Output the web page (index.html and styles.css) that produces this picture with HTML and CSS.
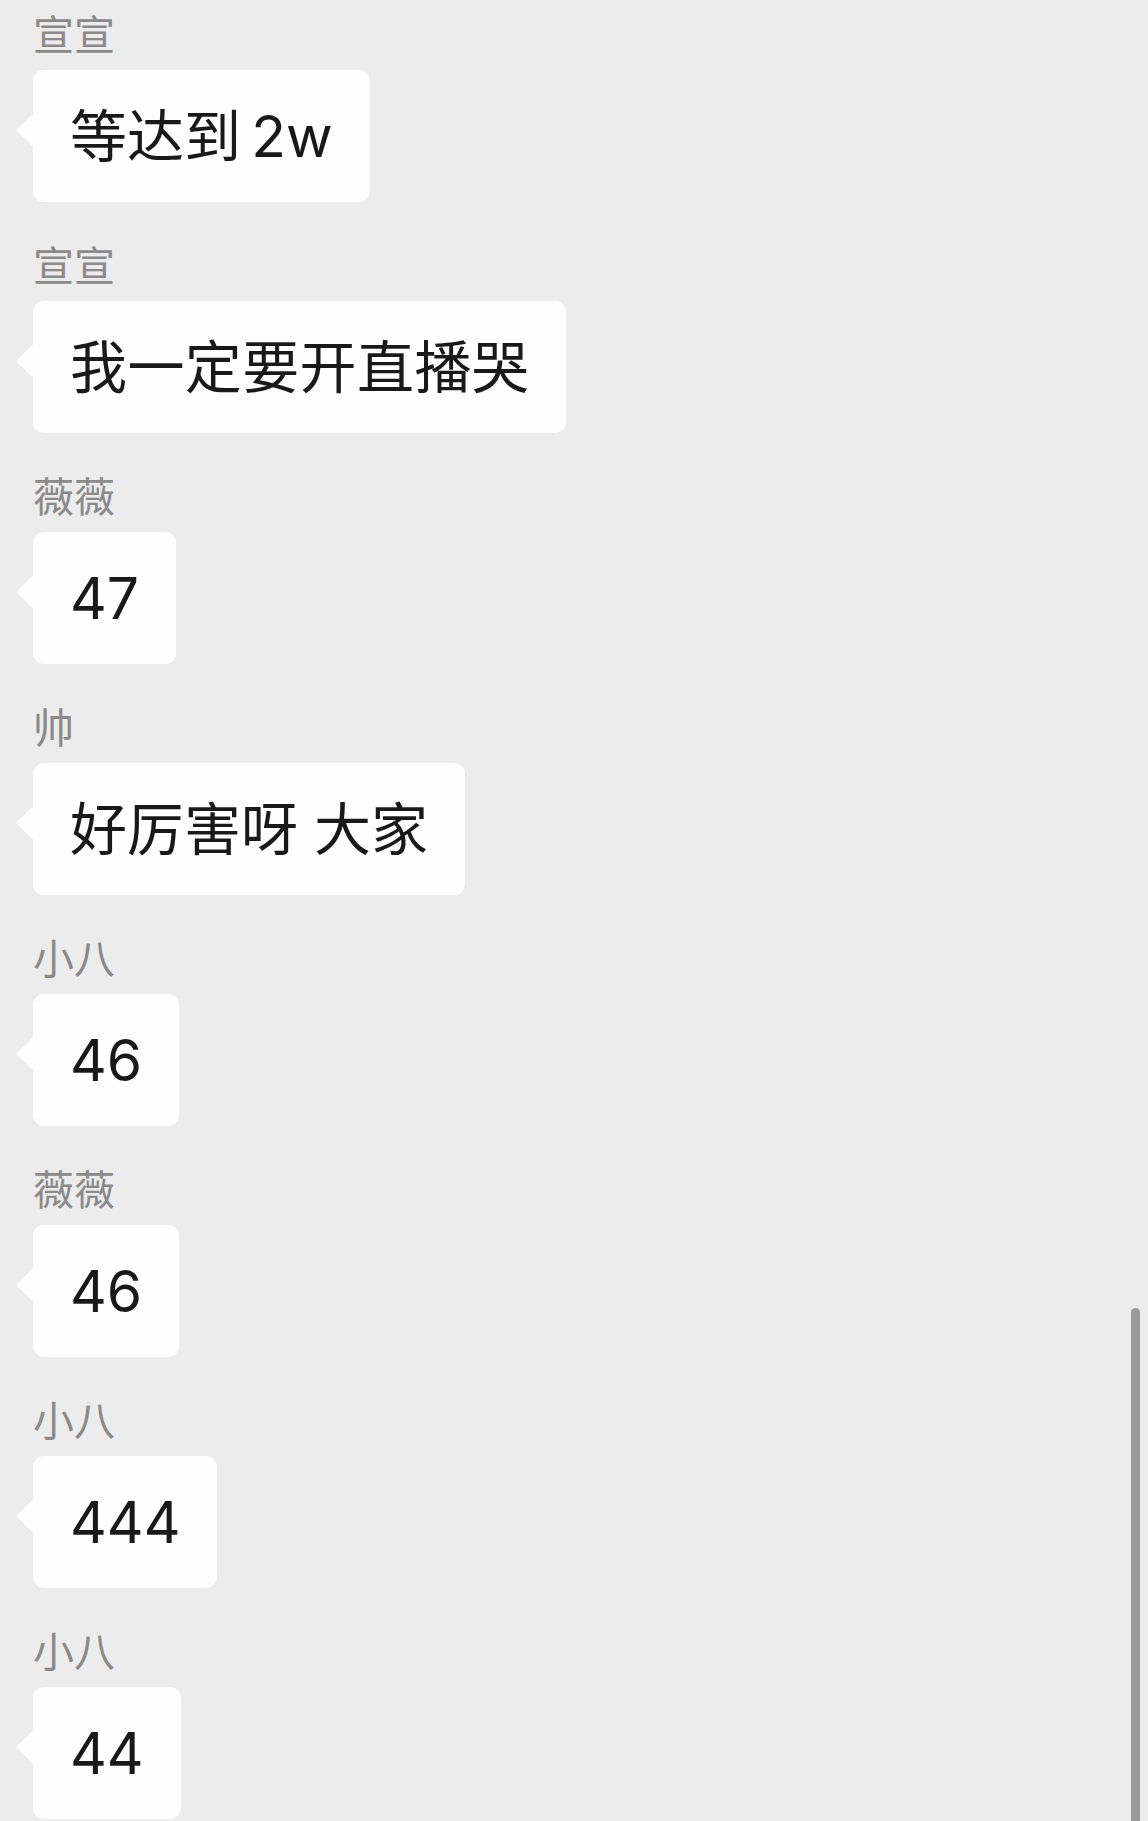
FILE: index.html
```html
<!DOCTYPE html>
<html lang="zh-CN">
<head>
    <meta charset="UTF-8">
    <meta name="viewport" content="width=device-width, initial-scale=1.0">
    <title>群聊</title>
    <link rel="stylesheet" href="styles.css">
</head>
<body>
    <div class="chat">
        <div class="msg">
            <div class="name">宣宣</div>
            <div class="bubble">等达到&thinsp;2w</div>
        </div>
        <div class="msg">
            <div class="name">宣宣</div>
            <div class="bubble wide">我一定要开直播哭</div>
        </div>
        <div class="msg">
            <div class="name">薇薇</div>
            <div class="bubble">47</div>
        </div>
        <div class="msg">
            <div class="name">帅</div>
            <div class="bubble">好厉害呀 大家</div>
        </div>
        <div class="msg">
            <div class="name">小八</div>
            <div class="bubble">46</div>
        </div>
        <div class="msg">
            <div class="name">薇薇</div>
            <div class="bubble">46</div>
        </div>
        <div class="msg">
            <div class="name">小八</div>
            <div class="bubble">444</div>
        </div>
        <div class="msg">
            <div class="name">小八</div>
            <div class="bubble">44</div>
        </div>
    </div>
    <!-- scroll thumb at the right edge -->
    <div class="scroll-thumb"></div>
</body>
</html>
```

FILE: styles.css
```css
html, body {
    margin: 0;
    height: 100%;
    overflow: hidden;
}

body {
    font-family: Inter, "Noto Sans CJK SC", sans-serif;
    background-color: #ececec;
}

.chat {
    display: flex;
    flex-direction: column;
    align-items: flex-start;
    padding: 11px 0 0 33px;
}

.msg {
    display: flex;
    flex-direction: column;
    align-items: flex-start;
    margin-bottom: 40px;
}

.name {
    font-size: 41px;
    line-height: 48px;
    color: #8a8a8a;
}

.bubble {
    position: relative;
    margin-top: 11px;
    padding: 27px 37px 25px;
    font-size: 57px;
    line-height: 80px;
    color: #191919;
    background: #fefefe;
    border-radius: 11px;
}

.bubble.wide {
    letter-spacing: 0.4px;
}

/* little pointer on the left side of the bubble */
.bubble::before {
    content: "";
    position: absolute;
    left: -12px;
    top: 48px;
    width: 24px;
    height: 24px;
    background: #fefefe;
    border-radius: 3px;
    transform: rotate(45deg);
}

.scroll-thumb {
    position: fixed;
    top: 1308px;
    right: 8px;
    width: 9px;
    height: 600px;
    background: #999999;
    border-radius: 5px;
}
```
